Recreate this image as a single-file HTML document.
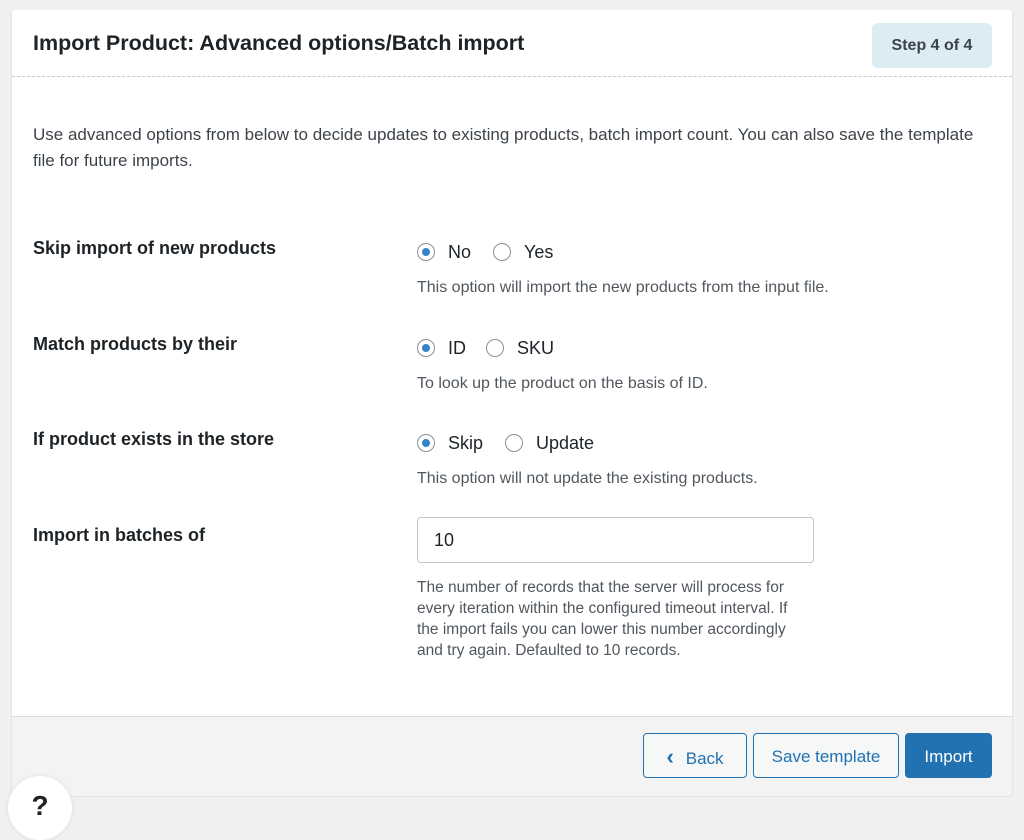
<!DOCTYPE html>
<html><head><style>
body{margin:0;width:1024px;height:806px;background:#f0f0f1;font-family:"Liberation Sans",sans-serif;position:relative;overflow:hidden;color:#1d2327}
.card{position:absolute;left:12px;top:10px;width:1000px;height:785px;background:#fff;box-shadow:0 1px 2px rgba(0,0,0,.15)}
.a{position:absolute;white-space:nowrap}
h1{position:absolute;left:21px;top:21px;margin:0;font-size:21.5px;font-weight:bold;color:#1d2327}
.step{position:absolute;left:860px;top:13px;width:120px;height:45px;background:#dcecf3;border-radius:6px;font-size:16px;font-weight:bold;color:#3c434a;line-height:45px;text-align:center}
.dash{position:absolute;left:0;top:66px;width:1000px;border-top:1px dashed #c9c9c9}
.lbl{font-size:18px;font-weight:bold;left:21px}
.opt{font-size:18px;color:#1d2327}
.desc{font-size:16px;color:#50575e}
.r{position:absolute;width:16px;height:16px;border:1px solid #8c8f94;border-radius:50%;background:#fff}
.r.on::after{content:"";position:absolute;left:4px;top:4px;width:8px;height:8px;border-radius:50%;background:#3582c4}
.foot{position:absolute;left:0;top:706px;width:1000px;height:79px;background:#f3f3f3;border-top:1px solid #dcdcde}
.btn{position:absolute;top:16px;height:45px;border:1px solid #2271b1;border-radius:4px;background:#f6f7f7;color:#2271b1;font-size:17px;line-height:45px;text-align:center;box-sizing:border-box}
</style></head><body>
<div class="card">
<h1>Import Product: Advanced options/Batch import</h1>
<div class="step">Step 4 of 4</div>
<div class="dash"></div>
<div class="a" style="left:21px;top:112px;font-size:17px;line-height:26px;color:#3c434a;white-space:normal;width:950px">Use advanced options from below to decide updates to existing products, batch import count. You can also save the template file for future imports.</div>

<div class="a lbl" style="top:228px">Skip import of new products</div>
<div class="r on" style="left:405px;top:233px"></div><div class="a opt" style="left:436px;top:232px">No</div>
<div class="r" style="left:481px;top:233px"></div><div class="a opt" style="left:512px;top:232px">Yes</div>
<div class="a desc" style="left:405px;top:269px">This option will import the new products from the input file.</div>

<div class="a lbl" style="top:324px">Match products by their</div>
<div class="r on" style="left:405px;top:329px"></div><div class="a opt" style="left:436px;top:328px">ID</div>
<div class="r" style="left:474px;top:329px"></div><div class="a opt" style="left:505px;top:328px">SKU</div>
<div class="a desc" style="left:405px;top:365px">To look up the product on the basis of ID.</div>

<div class="a lbl" style="top:419px">If product exists in the store</div>
<div class="r on" style="left:405px;top:424px"></div><div class="a opt" style="left:436px;top:423px">Skip</div>
<div class="r" style="left:493px;top:424px"></div><div class="a opt" style="left:524px;top:423px">Update</div>
<div class="a desc" style="left:405px;top:460px">This option will not update the existing products.</div>

<div class="a lbl" style="top:515px">Import in batches of</div>
<div class="a" style="left:405px;top:507px;width:397px;height:46px;border:1px solid #c3c4c7;border-radius:4px;box-sizing:border-box;font-size:18px;line-height:44px;padding-left:16px">10</div>
<div class="a desc" style="left:405px;top:567px;white-space:normal;width:390px;line-height:21px;font-size:15.5px">The number of records that the server will process for every iteration within the configured timeout interval. If the import fails you can lower this number accordingly and try again. Defaulted to 10 records.</div>

<div class="foot">
<div class="btn" style="left:631px;width:104px"><span style="font-size:22px;font-weight:bold;margin-right:12px">‹</span>Back</div>
<div class="btn" style="left:741px;width:146px">Save template</div>
<div class="btn" style="left:893px;width:87px;background:#2271b1;color:#fff">Import</div>
</div>
</div>
<div class="a" style="left:8px;top:776px;width:64px;height:64px;border-radius:50%;background:#fff;box-shadow:0 0 4px rgba(0,0,0,.1);text-align:center;font-size:28px;font-weight:bold;color:#1d2327;line-height:60px">?</div>
</body></html>
